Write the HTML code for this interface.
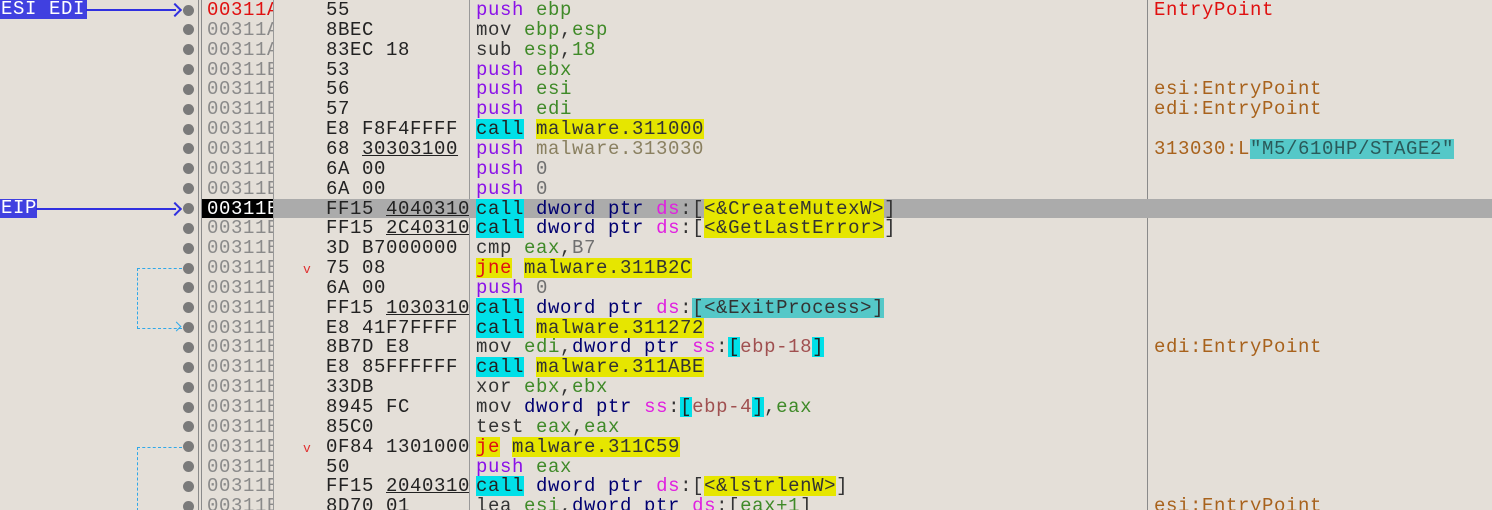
<!DOCTYPE html><html style="overflow:hidden;height:510px"><head><style>
body{margin:0;width:1492px;height:510px;overflow:hidden;background:#e4dfd8;position:relative;font-family:"Liberation Mono",monospace;font-size:19px;letter-spacing:0.6px}
.r{position:absolute;left:0;width:1492px;height:20px;line-height:20px;white-space:pre}
.c{position:absolute;top:0;height:20px;overflow:hidden}
.a{left:207px;width:66px;color:#8a8a8a}
.b{left:326px;width:143px;color:#222}
.d{left:476px;width:670px;color:#333}
.m{left:1154px;color:#a8621c}
.p{color:#8a10e8}.g{color:#3f8a28}.n{color:#707070}.k{color:#000070}.s{color:#e020e0}
.y{background:#e6e600;color:#333}.cy{background:#00e0e8;color:#222}
.u{text-decoration:underline}
.vl{position:absolute;top:0;height:510px;width:1px;background:#8a8a8a}
.dot{position:absolute;left:183px;width:11px;height:11px;border-radius:50%;background:#7a7a7a}
</style></head><body>
<div class="vl" style="left:198px"></div><div class="vl" style="left:201px"></div>
<div class="vl" style="left:273px;background:#999"></div><div class="vl" style="left:469px;background:#999"></div><div class="vl" style="left:1147px;background:#8a8a8a"></div>
<div style="position:absolute;left:274px;top:199px;width:1218px;height:19px;background:#ababab"></div>
<div style="position:absolute;left:202px;top:199px;width:71px;height:19px;background:#000"></div>
<div style="position:absolute;left:0;top:0;width:86px;height:19px;background:#4040e0;color:#fff;line-height:19px;padding-left:1px">ESI EDI</div>
<div style="position:absolute;left:86px;top:9px;width:90px;height:2px;background:#3030e0"></div>
<div style="position:absolute;left:170px;top:5px;width:8px;height:8px;border-top:2px solid #3030e0;border-right:2px solid #3030e0;transform:rotate(45deg)"></div>
<div style="position:absolute;left:0;top:199px;width:36px;height:19px;background:#4040e0;color:#fff;line-height:19px;padding-left:1px">EIP</div>
<div style="position:absolute;left:36px;top:208px;width:140px;height:2px;background:#3030e0"></div>
<div style="position:absolute;left:170px;top:204px;width:8px;height:8px;border-top:2px solid #3030e0;border-right:2px solid #3030e0;transform:rotate(45deg)"></div>
<div style="position:absolute;left:137px;top:268px;width:44px;height:59px;border:1px dashed #30a8e8;border-right:none"></div>
<div style="position:absolute;left:173px;top:323px;width:6px;height:6px;border-top:1px solid #30a8e8;border-right:1px solid #30a8e8;transform:rotate(45deg)"></div>
<div style="position:absolute;left:137px;top:447px;width:44px;height:63px;border-top:1px dashed #30a8e8;border-left:1px dashed #30a8e8"></div>
<div style="position:absolute;left:303px;top:262px;color:#e03030;font-size:13px">v</div>
<div style="position:absolute;left:303px;top:441px;color:#e03030;font-size:13px">v</div>
<div id="rows"></div>
<script>
var R=[
["00311A","55",'<span class="p">push</span> <span class="g">ebp</span>','<span style="color:#e01010">EntryPoint</span>'],
["00311A","8BEC",'mov <span class="g">ebp</span>,<span class="g">esp</span>',''],
["00311A","83EC 18",'sub <span class="g">esp</span>,<span class="g">18</span>',''],
["00311B","53",'<span class="p">push</span> <span class="g">ebx</span>',''],
["00311B","56",'<span class="p">push</span> <span class="g">esi</span>','esi:EntryPoint'],
["00311B","57",'<span class="p">push</span> <span class="g">edi</span>','edi:EntryPoint'],
["00311B","E8 F8F4FFFF",'<span class="cy">call</span> <span class="y">malware.311000</span>',''],
["00311B",'68 <span class="u">30303100</span>','<span class="p">push</span> <span style="color:#8a8060">malware.313030</span>','313030:L<span style="background:#55c8c8;color:#2a5a5a">"M5/610HP/STAGE2"</span>'],
["00311B","6A 00",'<span class="p">push</span> <span class="n">0</span>',''],
["00311B","6A 00",'<span class="p">push</span> <span class="n">0</span>',''],
["00311B",'FF15 <span class="u">4040310</span>','<span class="cy">call</span> <span class="k">dword ptr</span> <span class="s">ds</span>:[<span class="y">&lt;&amp;CreateMutexW&gt;</span>]',''],
["00311B",'FF15 <span class="u">2C40310</span>','<span class="cy">call</span> <span class="k">dword ptr</span> <span class="s">ds</span>:[<span class="y">&lt;&amp;GetLastError&gt;</span>]',''],
["00311B","3D B7000000",'cmp <span class="g">eax</span>,<span class="n">B7</span>',''],
["00311B","75 08",'<span class="y" style="color:#e01010">jne</span> <span class="y">malware.311B2C</span>',''],
["00311B","6A 00",'<span class="p">push</span> <span class="n">0</span>',''],
["00311B",'FF15 <span class="u">1030310</span>','<span class="cy">call</span> <span class="k">dword ptr</span> <span class="s">ds</span>:<span style="background:#55c8c8">[&lt;&amp;ExitProcess&gt;]</span>',''],
["00311B","E8 41F7FFFF",'<span class="cy">call</span> <span class="y">malware.311272</span>',''],
["00311B","8B7D E8",'mov <span class="g">edi</span>,<span class="k">dword ptr</span> <span class="s">ss</span>:<span class="cy">[</span><span style="color:#a05050">ebp-18</span><span class="cy">]</span>','edi:EntryPoint'],
["00311B","E8 85FFFFFF",'<span class="cy">call</span> <span class="y">malware.311ABE</span>',''],
["00311B","33DB",'xor <span class="g">ebx</span>,<span class="g">ebx</span>',''],
["00311B","8945 FC",'mov <span class="k">dword ptr</span> <span class="s">ss</span>:<span class="cy">[</span><span style="color:#a05050">ebp-4</span><span class="cy">]</span>,<span class="g">eax</span>',''],
["00311B","85C0",'test <span class="g">eax</span>,<span class="g">eax</span>',''],
["00311B",'0F84 1301000','<span class="y" style="color:#e01010">je</span> <span class="y">malware.311C59</span>',''],
["00311B","50",'<span class="p">push</span> <span class="g">eax</span>',''],
["00311B",'FF15 <span class="u">2040310</span>','<span class="cy">call</span> <span class="k">dword ptr</span> <span class="s">ds</span>:[<span class="y">&lt;&amp;lstrlenW&gt;</span>]',''],
["00311B","8D70 01",'lea <span class="g">esi</span>,<span class="k">dword ptr</span> <span class="s">ds</span>:[<span class="g">eax+1</span>]','esi:EntryPoint']];
var h='';
R.forEach(function(r,i){var t=(i*19.85).toFixed(2);
var ac=i==0?'color:#e01010':(i==10?'color:#fff':'');
h+='<div class="dot" style="top:'+(i*19.85+4.5).toFixed(2)+'px"></div>';
h+='<div class="r" style="top:'+t+'px"><div class="c a" style="'+ac+'">'+r[0]+'</div><div class="c b">'+r[1]+'</div><div class="c d">'+r[2]+'</div><div class="c m">'+r[3]+'</div></div>';});
document.getElementById('rows').innerHTML=h;
</script>
</body></html>
